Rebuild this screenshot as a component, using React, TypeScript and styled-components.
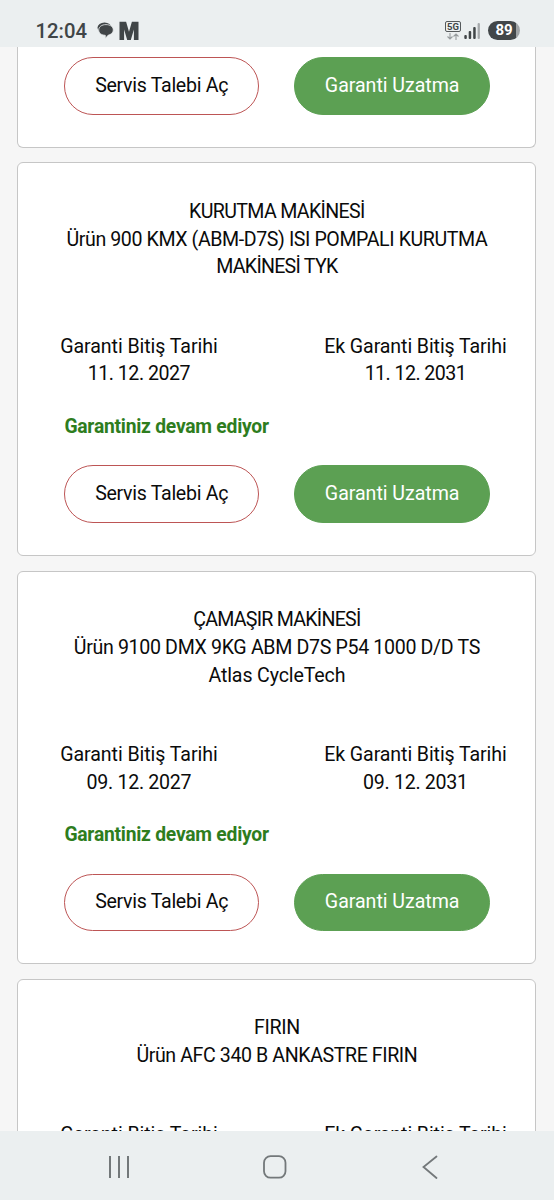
import React from 'react';
import styled, { createGlobalStyle } from 'styled-components';

const GlobalStyle = createGlobalStyle`
  * { box-sizing: border-box; }
  body { margin: 0; background: #f6f6f6; font-family: Roboto, "Noto Sans", sans-serif; }
`;

const Screen = styled.div`
  display: flex;
  flex-direction: column;
  width: 554px;
  height: 1200px;
  overflow: hidden;
  background: #f6f6f6;
`;

const StatusBar = styled.header`
  flex: none;
  display: flex;
  justify-content: space-between;
  align-items: center;
  height: 47px;
  padding: 14px 34px 0 35.5px;
  background: #ebeff0;
  color: #404547;
`;

const StatusGroup = styled.div`
  display: flex;
  align-items: center;
`;

const Clock = styled.span`
  width: 61px;
  font-size: 20.3px;
  font-weight: 500;
  line-height: 24px;
`;

const Battery = styled.div`
  width: 32px;
  height: 19px;
  margin-left: 7px;
  border-radius: 10px;
  background: linear-gradient(90deg, #424749 0 28px, #a0a4a6 28px);
  color: #fff;
  font-size: 15px;
  font-weight: 700;
  line-height: 19px;
  text-align: center;
`;

const CardList = styled.main`
  flex: 1;
  min-height: 0;
  overflow: hidden;
  padding: 0 17.6px 0 17.4px;
`;

const Card = styled.section<{ $continued?: boolean }>`
  padding: ${(p) => (p.$continued ? '10px' : '34.5px')} 0 32px;
  margin-bottom: 14.8px;
  border: 1px solid #c6c6c6;
  border-width: ${(p) => (p.$continued ? '0 1px 1px' : '1px')};
  border-radius: ${(p) => (p.$continued ? '0 0 6px 6px' : '6px')};
  background: #fff;
`;

const Line = styled.div<{ $track?: number }>`
  color: #0b0b0b;
  font-size: 19.6px;
  line-height: 27.8px;
  letter-spacing: ${(p) => p.$track ?? 0}px;
  white-space: nowrap;
  text-align: center;
`;

const Dates = styled.div`
  display: flex;
  justify-content: space-between;
  padding: 51.5px 29px 0 42px;
`;

const DateCell = styled.div<{ $width: number }>`
  display: flex;
  flex-direction: column;
  align-items: center;
  width: ${(p) => p.$width}px;
`;

const WarrantyState = styled.p`
  margin: 24.5px 0 0 46px;
  color: #2e7d1e;
  font-size: 19.3px;
  font-weight: 700;
  line-height: 28px;
  letter-spacing: -0.24px;
`;

const Actions = styled.div<{ $spaced?: boolean }>`
  display: flex;
  gap: 35px;
  margin: ${(p) => (p.$spaced ? '24.5px' : '0')} 0 0 45.5px;
`;

const PillButton = styled.button<{ $filled?: boolean }>`
  width: 195.5px;
  height: 57.5px;
  padding: 0 0 1px;
  border: 1px solid ${(p) => (p.$filled ? '#5ca053' : '#bd5555')};
  border-radius: 29px;
  background: ${(p) => (p.$filled ? '#5ca053' : '#fff')};
  color: ${(p) => (p.$filled ? '#fff' : '#0b0b0b')};
  font-family: inherit;
  font-size: 19.6px;
  letter-spacing: ${(p) => (p.$filled ? '-0.04px' : '-0.3px')};
`;

const NavBar = styled.nav`
  flex: none;
  display: flex;
  justify-content: center;
  align-items: center;
  gap: 124px;
  height: 69px;
  padding: 2px 4px 0 0;
  background: #ebeff0;
`;

type Text = [string, number];
interface Product {
  title: Text[];
  end: Text;
  extended: Text;
}

const products: Product[] = [
  {
    title: [
      ['KURUTMA MAKİNESİ', -0.66],
      ['Ürün 900 KMX (ABM-D7S) ISI POMPALI KURUTMA', -0.41],
      ['MAKİNESİ TYK', -0.75],
    ],
    end: ['11. 12. 2027', -0.5],
    extended: ['11. 12. 2031', -0.55],
  },
  {
    title: [
      ['ÇAMAŞIR MAKİNESİ', -0.75],
      ['Ürün 9100 DMX 9KG ABM D7S P54 1000 D/D TS', -0.34],
      ['Atlas CycleTech', -0.14],
    ],
    end: ['09. 12. 2027', -0.28],
    extended: ['09. 12. 2031', -0.28],
  },
  {
    title: [
      ['FIRIN', -0.35],
      ['Ürün AFC 340 B ANKASTRE FIRIN', -0.41],
    ],
    end: ['11. 12. 2027', -0.5],
    extended: ['11. 12. 2031', -0.5],
  },
];

function CardActions({ spaced }: { spaced?: boolean }) {
  return (
    <Actions $spaced={spaced}>
      <PillButton>Servis Talebi Aç</PillButton>
      <PillButton $filled>Garanti Uzatma</PillButton>
    </Actions>
  );
}

function ProductCard({ product }: { product: Product }) {
  return (
    <Card>
      {product.title.map(([text, track]) => (
        <Line key={text} $track={track}>{text}</Line>
      ))}
      <Dates>
        <DateCell $width={157}>
          <Line $track={-0.06}>Garanti Bitiş Tarihi</Line>
          <Line $track={product.end[1]}>{product.end[0]}</Line>
        </DateCell>
        <DateCell $width={182}>
          <Line $track={-0.1}>Ek Garanti Bitiş Tarihi</Line>
          <Line $track={product.extended[1]}>{product.extended[0]}</Line>
        </DateCell>
      </Dates>
      <WarrantyState>Garantiniz devam ediyor</WarrantyState>
      <CardActions spaced />
    </Card>
  );
}

function NotificationIcons() {
  return (
    <svg width="42" height="20" viewBox="0 0 42 20" fill="#404547">
      <ellipse cx="7.500" cy="6.800" rx="7" ry="5.200" />
      <path
        d="M9 3.600c4.200 0 7.300 2.200 7.300 5.400 0 2.800-2.500 4.700-5.300 5.300L8.300 17.600v-3.300C4.400 14.100 1.700 12.200 1.700 9c0-3.200 3.100-5.400 7.300-5.400Z"
        stroke="#ebeff0"
        strokeWidth=".8"
      />
      <path d="M22.500 19V.8h6.600L32 10.800 34.900.8h6.600V19h-4.600V8.500L33.800 19h-3.600L27.100 8.500V19Z" />
    </svg>
  );
}

const NetworkLabel = styled.span`
  width: 16px;
  height: 11px;
  border: 1px solid #55595b;
  border-radius: 2px;
  font-size: 9.5px;
  font-weight: 700;
  line-height: 9px;
  text-align: center;
`;

const Network = styled.div`
  display: flex;
  flex-direction: column;
  align-items: center;
  gap: 1px;
  margin-right: 3px;
`;

export default function App() {
  return (
    <>
      <GlobalStyle />
      <Screen>
        <StatusBar>
          <StatusGroup>
            <Clock>12:04</Clock>
            <NotificationIcons />
          </StatusGroup>
          <StatusGroup>
            <Network>
              <NetworkLabel>5G</NetworkLabel>
              <svg width="12" height="7" viewBox="0 0 12 7" fill="none" stroke="#979c9e" strokeWidth="1.1">
                <path d="M3 0v6M.5 3.500 3 6l2.500-2.500M9 7V1M6.500 3.500 9 1l2.500 2.500" />
              </svg>
            </Network>
            <svg width="17" height="18" viewBox="0 0 17 18" fill="#404547">
              <rect x="0.300" y="13" width="2.500" height="4" rx="1" />
              <rect x="4.700" y="9" width="2.500" height="8" rx="1" />
              <rect x="9.200" y="5" width="2.500" height="12" rx="1" />
              <rect x="13.600" y="1" width="2.300" height="16" rx="1" fill="#a5a9ab" />
            </svg>
            <Battery>89</Battery>
          </StatusGroup>
        </StatusBar>
        <CardList>
          <Card $continued>
            <CardActions />
          </Card>
          {products.map((product) => (
            <ProductCard key={product.title[0][0]} product={product} />
          ))}
        </CardList>
        <NavBar>
          <svg width="40" height="26" viewBox="0 0 40 26" fill="none" stroke="#73787a" strokeWidth="2">
            <path d="M11 2v22M20 2v22M29 2v22" />
          </svg>
          <svg width="24" height="26" viewBox="0 0 24 26" fill="none" stroke="#73787a" strokeWidth="1.800">
            <rect x="1" y="2.200" width="21.500" height="21.500" rx="6.500" />
          </svg>
          <svg width="40" height="26" viewBox="0 0 40 26" fill="none" stroke="#73787a" strokeWidth="1.800" strokeLinecap="round">
            <path d="M25.500 2.500 12.500 13l13 11" />
          </svg>
        </NavBar>
      </Screen>
    </>
  );
}
